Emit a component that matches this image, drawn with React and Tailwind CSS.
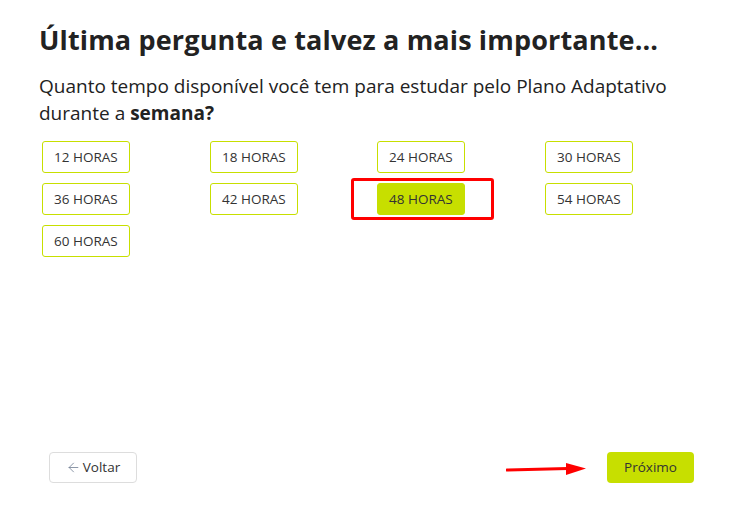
import { ArrowLeft } from "lucide-react";

const options = [12, 18, 24, 30, 36, 42, 48, 54, 60];
const selected = 48;

export default function App() {
  return (
    <div
      className="h-screen w-full bg-white flex flex-col text-[#222]"
      style={{ fontFamily: '"Open Sans", sans-serif' }}
    >
      <div className="pl-[39px] pr-4 pt-[21px]">
        <h1 className="text-[27px] font-bold leading-[38px] tracking-[0.15px] whitespace-nowrap">
          Última pergunta e talvez a mais importante...
        </h1>
        <p className="mt-[14px] text-[19px] leading-[27px] font-medium text-[#222] whitespace-nowrap">
          Quanto tempo disponível você tem para estudar pelo Plano Adaptativo
          <br />
          durante a <span className="font-bold">semana?</span>
        </p>
      </div>

      <div className="pl-[42px] mt-[14px] grid grid-cols-[168px_167px_168px_167px] gap-y-[10px]">
        {options.map((h) => {
          const isSel = h === selected;
          return (
            <div key={h} className="relative">
              {isSel && (
                <div className="absolute left-[-26px] top-[-5px] w-[143px] h-[42px] border-[3px] border-[#f00] rounded-[3px]" />
              )}
              <button
                className={`relative h-[32px] px-[11px] text-[13.5px] uppercase rounded-[3px] border ${
                  isSel
                    ? "bg-[#c7df00] border-[#c7df00] text-[#333]"
                    : "bg-white border-[#c7df00] text-[#333]"
                }`}
              >
                {h} HORAS
              </button>
            </div>
          );
        })}
      </div>

      <div className="flex-1" />

      <div className="relative flex items-center justify-between pl-[49px] pr-[42px] pb-[29px]">
        <button className="h-[31px] w-[88px] flex items-center justify-center gap-[2px] border border-[#ddd] rounded-[4px] text-[13.5px] text-[#333] bg-white">
          <ArrowLeft size={15} strokeWidth={1.25} className="text-[#6b7a90]" />
          Voltar
        </button>
        <svg
          className="absolute left-[506px] top-[10px]"
          width="82"
          height="14"
          viewBox="0 0 82 14"
        >
          <path d="M1 8 L62 6.5" stroke="#f00" strokeWidth="3" strokeLinecap="round" />
          <path d="M60 1 L80 6.5 L60 13 Z" fill="#f00" />
        </svg>
        <button className="h-[31px] w-[87px] rounded-[4px] bg-[#c7df00] text-[13.5px] text-[#333]">
          Próximo
        </button>
      </div>
    </div>
  );
}
